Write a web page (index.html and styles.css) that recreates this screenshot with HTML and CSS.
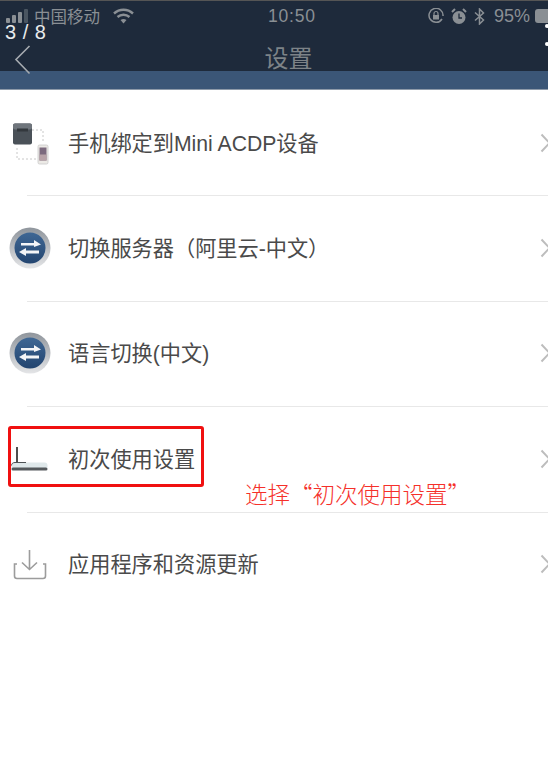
FILE: index.html
```html
<!DOCTYPE html>
<html lang="zh-CN">
<head>
    <meta charset="UTF-8">
    <meta name="viewport" content="width=device-width, initial-scale=1.0">
    <title>设置</title>
    <link rel="stylesheet" href="styles.css">
</head>
<body>
    <div class="phone">
        <div class="header">
            <div class="status-bar">
                <div class="status-left">
                    <svg class="signal" width="24" height="14" viewBox="0 0 24 14">
                        <rect x="0" y="9" width="4" height="5" rx="1" fill="#8a8f94"/>
                        <rect x="6" y="6" width="4" height="8" rx="1" fill="#8a8f94"/>
                        <rect x="12" y="3" width="4" height="11" rx="1" fill="#8a8f94"/>
                        <rect x="18" y="0" width="4" height="14" rx="1" fill="#4a5561"/>
                    </svg>
                    <span>中国移动</span>
                    <svg class="wifi" width="21" height="16" viewBox="0 0 21 16" fill="none" stroke="#8a8f94" stroke-width="2.4">
                        <path d="M1 5.5C6.5 .5 14.5 .5 20 5.5"/>
                        <path d="M4.5 9C8 6 13 6 16.5 9"/>
                        <path d="M10.5 15.5L7.5 12C9.5 10.5 11.5 10.5 13.5 12Z" fill="#8a8f94" stroke="none"/>
                    </svg>
                </div>
                <span class="status-time">10:50</span>
                <div class="status-right">
                    <svg width="16" height="16" viewBox="0 0 16 16" fill="none" stroke="#8a8f94" stroke-width="1.5">
                        <path d="M14 11A7 7 0 1 1 15 8"/>
                        <rect x="5" y="7" width="6" height="4.5" fill="#8a8f94" stroke="none"/>
                        <path d="M6 7V5.5a2 2 0 0 1 4 0V7" stroke-width="1.2"/>
                    </svg>
                    <svg width="16" height="17" viewBox="0 0 16 17">
                        <circle cx="8" cy="9.5" r="6.5" fill="#8a8f94"/>
                        <path d="M8 5.5V10H11" fill="none" stroke="#1e2a3b" stroke-width="1.3"/>
                        <path d="M1 4L4 1M15 4L12 1" stroke="#8a8f94" stroke-width="2"/>
                    </svg>
                    <svg width="11" height="17" viewBox="0 0 11 17" fill="none" stroke="#8a8f94" stroke-width="1.5">
                        <path d="M1 4.5L9.5 12 5.5 16V1L9.5 5 1 12.5"/>
                    </svg>
                    <span class="battery-text">95%</span>
                    <span class="battery"></span>
                </div>
            </div>
            <div class="nav-bar">
                <svg class="back" width="18" height="30" viewBox="0 0 18 30" fill="none" stroke="#a6abb0" stroke-width="1.6">
                    <path d="M15.5 1L2 14.5 15.5 28.5"/>
                </svg>
                <span class="nav-title">设置</span>
            </div>
        </div>
        <div class="band"></div>

        <ul class="menu">
            <li class="menu-item">
                <span class="menu-icon">
                    <svg width="40" height="44" viewBox="0 0 40 44">
                        <path d="M22 9H33V21M7 27V38H26" fill="none" stroke="#c8c8c8" stroke-width="1" stroke-dasharray="2 2"/>
                        <rect x="3" y="2.5" width="19" height="21" rx="2" fill="#4a5158"/>
                        <rect x="3" y="2.5" width="19" height="6" rx="2" fill="#6f757c"/>
                        <rect x="7" y="7.5" width="11" height="3" fill="#33383d"/>
                        <rect x="28" y="24" width="10" height="19" rx="1.5" fill="#eceae6" stroke="#c9c9c9" stroke-width=".8"/>
                        <rect x="29.5" y="26.5" width="7" height="13" fill="#7c6a7e"/>
                        <rect x="29.5" y="33.5" width="7" height="6" fill="#b8a3a8"/>
                    </svg>
                </span>
                <span class="menu-text">手机绑定到Mini ACDP设备</span>
                <svg class="chevron" width="11" height="20" viewBox="0 0 11 20"><path d="M1.5 1.5L9.5 10 1.5 18.5"/></svg>
            </li>
            <li class="menu-item">
                <span class="menu-icon">
                    <svg width="42" height="42" viewBox="0 0 42 42">
                        <defs>
                            <linearGradient id="ringFill" x1="0" y1="0" x2="0" y2="1">
                                <stop offset="0" stop-color="#8f959c"/>
                                <stop offset="1" stop-color="#e4e5e7"/>
                            </linearGradient>
                            <linearGradient id="discFill" x1="0" y1="0" x2="0" y2="1">
                                <stop offset="0" stop-color="#3f6794"/>
                                <stop offset="1" stop-color="#234570"/>
                            </linearGradient>
                        </defs>
                        <circle cx="21" cy="21" r="20.5" fill="url(#ringFill)"/>
                        <circle cx="21" cy="21" r="15.5" fill="url(#discFill)"/>
                        <path d="M12 16H25V13L32 17.5 25 20V18.5H12Z" fill="#f4f5f7"/>
                        <path d="M30 23.5H17V21L10 25 17 29V26.5H30Z" fill="#f4f5f7"/>
                    </svg>
                </span>
                <span class="menu-text">切换服务器（阿里云-中文）</span>
                <svg class="chevron" width="11" height="20" viewBox="0 0 11 20"><path d="M1.5 1.5L9.5 10 1.5 18.5"/></svg>
            </li>
            <li class="menu-item">
                <span class="menu-icon">
                    <svg width="42" height="42" viewBox="0 0 42 42">
                        <circle cx="21" cy="21" r="20.5" fill="url(#ringFill)"/>
                        <circle cx="21" cy="21" r="15.5" fill="url(#discFill)"/>
                        <path d="M12 16H25V13L32 17.5 25 20V18.5H12Z" fill="#f4f5f7"/>
                        <path d="M30 23.5H17V21L10 25 17 29V26.5H30Z" fill="#f4f5f7"/>
                    </svg>
                </span>
                <span class="menu-text">语言切换(中文)</span>
                <svg class="chevron" width="11" height="20" viewBox="0 0 11 20"><path d="M1.5 1.5L9.5 10 1.5 18.5"/></svg>
            </li>
            <li class="menu-item">
                <span class="menu-icon">
                    <svg width="40" height="26" viewBox="0 0 40 26">
                        <path d="M7 1V17" stroke="#2f2f2f" stroke-width="1.7"/>
                        <rect x="1.5" y="16.5" width="36" height="7.5" rx="3" fill="#dfe8ea"/>
                        <path d="M1.5 19.5C1.5 17.5 3 16.5 5 16.5H16" fill="none" stroke="#4d5154" stroke-width="1"/>
                        <rect x="1.5" y="21.5" width="36" height="3" rx="1.5" fill="#55595c"/>
                    </svg>
                </span>
                <span class="menu-text">初次使用设置</span>
                <svg class="chevron" width="11" height="20" viewBox="0 0 11 20"><path d="M1.5 1.5L9.5 10 1.5 18.5"/></svg>
            </li>
            <li class="menu-item">
                <span class="menu-icon">
                    <svg width="36" height="31" viewBox="0 0 36 31" fill="none" stroke="#9c9c9c" stroke-width="1.6">
                        <path d="M17.5 1V20M10 13.5L17.5 20.5 25 13.5"/>
                        <path d="M5 15H2.5V27C2.5 28.5 3.5 29.5 5 29.5H31C32.5 29.5 33.5 28.5 33.5 27V15H31"/>
                    </svg>
                </span>
                <span class="menu-text">应用程序和资源更新</span>
                <svg class="chevron" width="11" height="20" viewBox="0 0 11 20"><path d="M1.5 1.5L9.5 10 1.5 18.5"/></svg>
            </li>
        </ul>

        <span class="page-count">3 / 8</span>
        <span class="edge-dot edge-dot-top"></span>
        <span class="edge-dot edge-dot-bottom"></span>
        <div class="highlight-box"></div>
        <span class="annotation">选择“初次使用设置”</span>
    </div>
</body>
</html>
```

FILE: styles.css
```css
html, body {
    margin: 0;
    padding: 0;
    background-color: #fff;
}
body {
    font-family: "Liberation Sans", "Noto Sans CJK SC", sans-serif;
}
.phone {
    position: relative;
    width: 548px;
    height: 777px;
    overflow: hidden;
    background-color: #fff;
}
.header {
    height: 71px;
    background-color: #1e2a3b;
    border-top: 1px solid #555;
    box-sizing: border-box;
}
.status-bar {
    display: flex;
    align-items: center;
    height: 30px;
    padding: 0 0 0 6px;
    color: #8a8f94;
}
.status-left {
    display: flex;
    align-items: center;
    gap: 4px;
    width: 140px;
    font-size: 16.5px;
}
.status-left .wifi {
    margin-left: 9px;
}
.status-time {
    margin-left: 122px;
    font-size: 17.5px;
    letter-spacing: 0.8px;
}
.status-right {
    display: flex;
    align-items: center;
    gap: 7px;
    margin-left: auto;
}
.battery-text {
    font-size: 18px;
    margin-left: 2px;
}
.battery {
    width: 13px;
    height: 14px;
    margin-left: -2px;
    border-radius: 3px 0 0 3px;
    background-color: #8a8f94;
}
.nav-bar {
    display: flex;
    justify-content: center;
    position: relative;
    height: 40px;
}
.back {
    position: absolute;
    left: 14px;
    top: 14px;
}
.nav-title {
    font-size: 24px;
    line-height: 28px;
    margin-top: 14px;
    margin-left: 29px;
    color: #7d8388;
}
.band {
    height: 19px;
    background-color: #3b5677;
    border-bottom: 1px solid #8e9aa9;
    box-sizing: border-box;
}
.menu {
    list-style: none;
    margin: 0;
    padding: 0;
}
.menu-item {
    position: relative;
    display: flex;
    align-items: center;
    height: 105.4px;
    box-sizing: border-box;
}
.menu-item + .menu-item::before {
    content: "";
    position: absolute;
    top: 0;
    left: 27px;
    right: 0;
    height: 1px;
    background-color: #e8e8e8;
}
.menu-icon {
    display: flex;
    justify-content: center;
    width: 60px;
    flex: none;
    margin-right: 8px;
}
.menu-text {
    flex: 1;
    font-size: 21.2px;
    line-height: 28px;
    margin-top: 2px;
    color: #4a4a4a;
}
.chevron {
    flex: none;
    margin-right: -3px;
    fill: none;
    stroke: #bdbdbd;
    stroke-width: 2;
}
.page-count {
    position: absolute;
    left: 5px;
    top: 20px;
    font-size: 20px;
    line-height: 24px;
    color: #e8eaec;
    letter-spacing: 0.5px;
}
.edge-dot {
    position: absolute;
    left: 545px;
    width: 4px;
    height: 4px;
    border-radius: 50%;
    background-color: #fff;
}
.edge-dot-top {
    top: 24px;
}
.edge-dot-bottom {
    top: 42px;
}
.highlight-box {
    position: absolute;
    left: 8px;
    top: 426px;
    width: 190px;
    height: 55px;
    border: 3px solid #f01010;
    border-radius: 3px;
}
.annotation {
    position: absolute;
    left: 245px;
    top: 479px;
    font-family: "Noto Sans CJK SC", sans-serif;
    font-size: 22.5px;
    font-weight: 300;
    line-height: 28px;
    color: #f5302a;
}
```
